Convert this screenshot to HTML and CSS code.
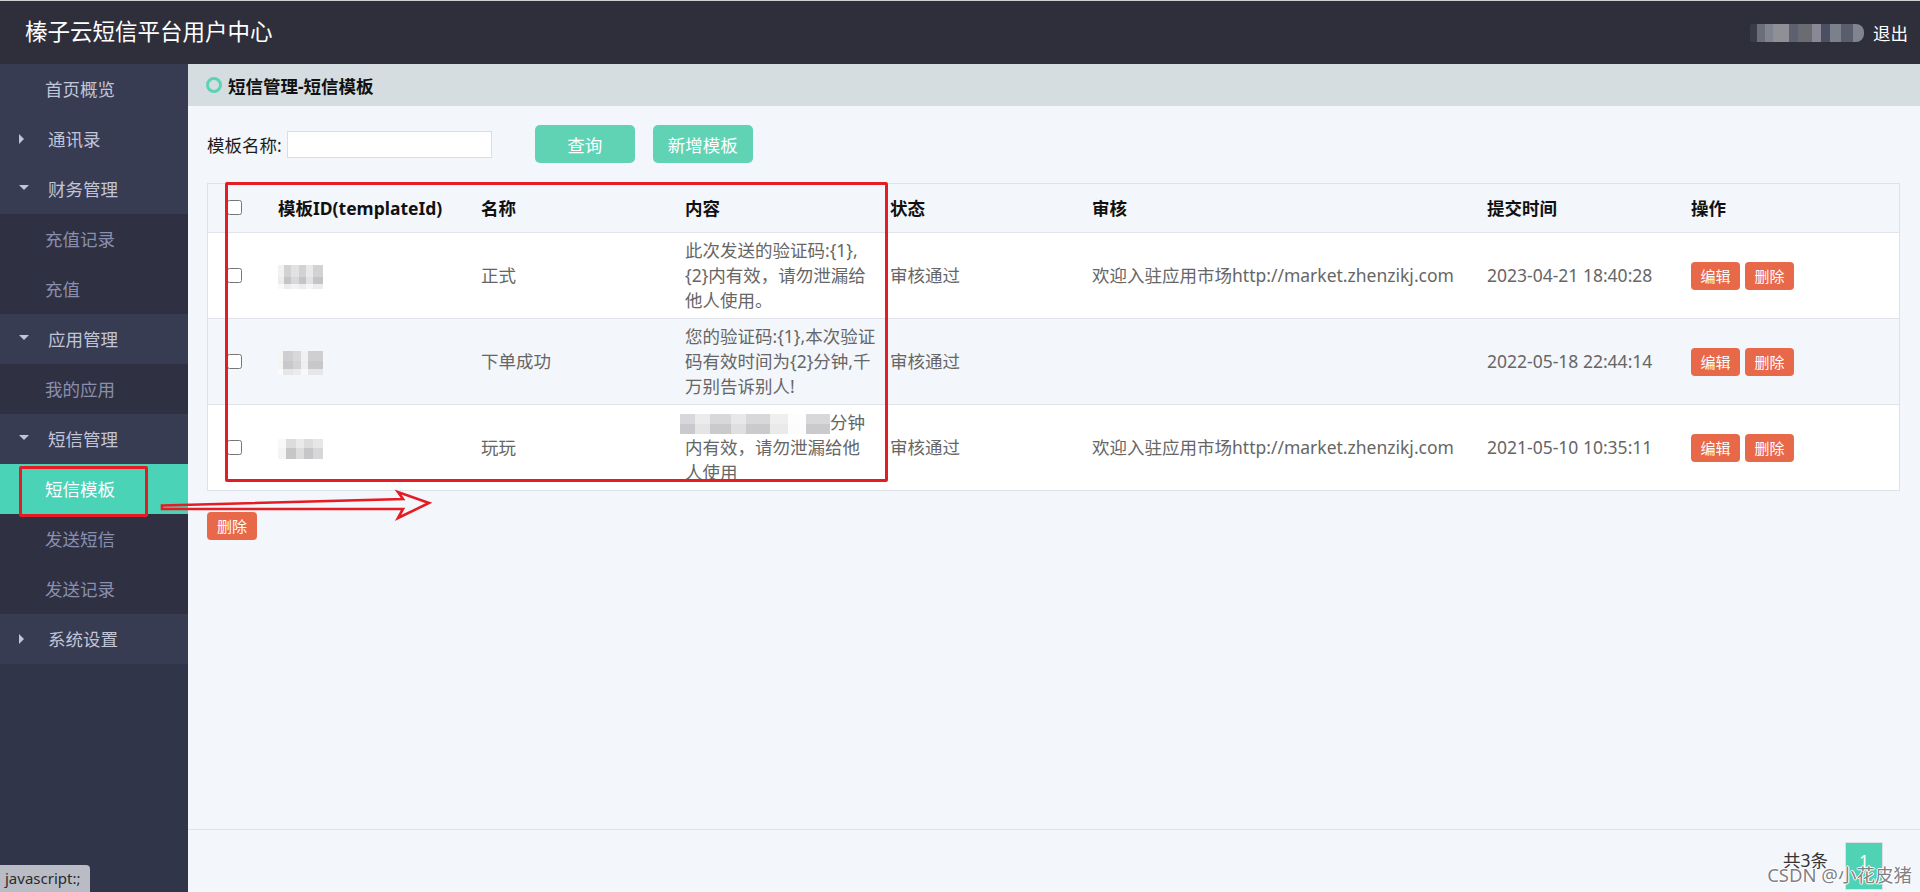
FILE: index.html
```html
<!DOCTYPE html>
<html lang="zh-CN">
<head>
<meta charset="utf-8">
<title>榛子云短信平台用户中心</title>
<link rel="stylesheet" href="styles.css">
</head>
<body>
<header class="topbar">
  <div class="brand">榛子云短信平台用户中心</div>
  <div class="user"><span class="mosaic mosaic-user"></span><a class="logout" href="javascript:;">退出</a></div>
</header>
<div class="layout">
  <aside class="sidebar">
    <ul class="menu">
      <li class="item top plain">首页概览</li>
      <li class="item top"><span class="caret caret-right"></span>通讯录</li>
      <li class="item top"><span class="caret caret-down"></span>财务管理</li>
      <li class="item sub">充值记录</li>
      <li class="item sub">充值</li>
      <li class="item top"><span class="caret caret-down"></span>应用管理</li>
      <li class="item sub">我的应用</li>
      <li class="item top"><span class="caret caret-down"></span>短信管理</li>
      <li class="item sub active">短信模板</li>
      <li class="item sub">发送短信</li>
      <li class="item sub">发送记录</li>
      <li class="item top"><span class="caret caret-right"></span>系统设置</li>
    </ul>
  </aside>
  <main class="main">
    <div class="crumb"><span class="ring"></span>短信管理-短信模板</div>
    <div class="content">
      <div class="search">
        <label class="search-label">模板名称:</label>
        <input class="search-input" type="text">
        <button class="btn btn-teal btn-query">查询</button>
        <button class="btn btn-teal btn-add">新增模板</button>
      </div>
      <table class="grid">
        <colgroup>
          <col class="c-check"><col class="c-id"><col class="c-name"><col class="c-content">
          <col class="c-status"><col class="c-audit"><col class="c-time"><col class="c-op">
        </colgroup>
        <thead>
          <tr>
            <th class="cell-check"><input type="checkbox" class="chk"></th>
            <th>模板ID(templateId)</th>
            <th>名称</th>
            <th>内容</th>
            <th>状态</th>
            <th>审核</th>
            <th>提交时间</th>
            <th>操作</th>
          </tr>
        </thead>
        <tbody>
          <tr>
            <td class="cell-check"><input type="checkbox" class="chk"></td>
            <td><span class="mosaic mosaic-id"></span></td>
            <td>正式</td>
            <td class="cell-content">此次发送的验证码:{1},<br>{2}内有效，请勿泄漏给<br>他人使用。</td>
            <td>审核通过</td>
            <td>欢迎入驻应用市场http://market.zhenzikj.com</td>
            <td>2023-04-21 18:40:28</td>
            <td><span class="ops"><button class="btn-sm">编辑</button><button class="btn-sm">删除</button></span></td>
          </tr>
          <tr class="alt">
            <td class="cell-check"><input type="checkbox" class="chk"></td>
            <td><span class="mosaic mosaic-id mosaic-id2"></span></td>
            <td>下单成功</td>
            <td class="cell-content">您的验证码:{1},本次验证<br>码有效时间为{2}分钟,千<br>万别告诉别人!</td>
            <td>审核通过</td>
            <td></td>
            <td>2022-05-18 22:44:14</td>
            <td><span class="ops"><button class="btn-sm">编辑</button><button class="btn-sm">删除</button></span></td>
          </tr>
          <tr>
            <td class="cell-check"><input type="checkbox" class="chk"></td>
            <td><span class="mosaic mosaic-id mosaic-id3"></span></td>
            <td>玩玩</td>
            <td class="cell-content"><span class="mosaic mosaic-text"></span>分钟<br>内有效，请勿泄漏给他<br>人使用</td>
            <td>审核通过</td>
            <td>欢迎入驻应用市场http://market.zhenzikj.com</td>
            <td>2021-05-10 10:35:11</td>
            <td><span class="ops"><button class="btn-sm">编辑</button><button class="btn-sm">删除</button></span></td>
          </tr>
        </tbody>
      </table>
      <button class="btn-sm btn-del-all">删除</button>
    </div>
    <div class="pager"><span class="total">共3条</span><span class="page">1</span></div>
  </main>
</div>
<div class="statusbar">javascript:;</div>
<div class="watermark">CSDN @小花皮猪</div>
<div class="mark mark-menu"></div>
<div class="mark mark-table"></div>
<svg class="arrow" width="285" height="36" viewBox="0 0 285 36">
  <path d="M7 17.5 L248 11 L243 4 L274 15 L243 30 L248 21 L7 21 Z" fill="none" stroke="#e61c24" stroke-width="2.6" stroke-linejoin="miter"/>
</svg>
</body>
</html>
```
FILE: styles.css
```css
* { box-sizing: border-box; }
html, body { margin: 0; padding: 0; height: 100%; overflow: hidden; }
body {
  font-family: "Noto Sans", "Noto Sans CJK SC", sans-serif;
  font-size: 17.5px;
  color: #333;
  background: #f3f6fa;
  position: relative;
}

/* top bar */
.topbar {
  height: 64px;
  border-top: 1px solid #cfd0d4;
  background: #2e2f3b;
  display: flex;
  align-items: center;
  justify-content: space-between;
  padding: 0 12px 0 25px;
}
.brand { color: #fff; font-size: 22.5px; line-height: 30px; margin-top: -1px; }
.user { display: flex; align-items: center; }
.logout { color: #fff; text-decoration: none; font-size: 17.5px; margin-left: 9px; }

/* layout */
.layout { display: flex; height: calc(100% - 64px); }
.sidebar { width: 188px; flex: none; background: #31354a; }
.menu { list-style: none; margin: 0; padding: 0; }
.item {
  height: 50px;
  line-height: 50px;
  font-size: 17.5px;
  white-space: nowrap;
}
.item.top {
  background: #383c53;
  color: #c1c5d8;
  display: flex;
  align-items: center;
  padding-left: 19px;
}
.item.plain { padding-left: 45px; }
.item.sub { background: #2f3142; color: #8a8fae; padding-left: 45px; }
.item.sub.active { background: #4ad3b7; color: #fff; }
.caret { display: inline-block; width: 0; height: 0; }
.caret-right {
  border-left: 5px solid #c1c5d8;
  border-top: 5px solid transparent;
  border-bottom: 5px solid transparent;
  margin-right: 24px;
}
.caret-down {
  border-top: 5px solid #c1c5d8;
  border-left: 5px solid transparent;
  border-right: 5px solid transparent;
  margin-right: 19px;
  margin-top: -3px;
}

/* main */
.main { flex: 1; display: flex; flex-direction: column; background: #f3f6fa; min-width: 0; }
.crumb {
  height: 42px;
  background: #d5dde0;
  display: flex;
  align-items: center;
  padding-left: 18px;
  font-weight: 700;
  color: #111;
  font-size: 17.5px;
}
.ring {
  width: 16px; height: 16px;
  border: 3.5px solid #5dd3b6;
  border-radius: 50%;
  margin-right: 6px;
}
.content { flex: 1; padding: 19px 20px 0 19px; }

.search { display: flex; align-items: center; height: 38px; }
.search-label { color: #1c1c1c; font-size: 17.5px; }
.search-input {
  width: 205px; height: 27px;
  margin-left: 5px;
  border: 1px solid #d8dee6;
  background: #fff;
  outline: none;
}
.btn {
  height: 38px; width: 100px;
  border: none;
  border-radius: 5px;
  font-family: inherit;
  font-size: 17.5px;
  color: #fff;
  padding: 0;
}
.btn-teal { background: #60d3b5; }
.btn-query { margin-left: 43px; }
.btn-add { margin-left: 18px; }

/* table */
.grid {
  width: 100%;
  margin-top: 20px;
  border: 1px solid #dfe3e9;
  border-spacing: 0;
  border-collapse: separate;
  table-layout: fixed;
  font-size: 17.5px;
  line-height: 25px;
}
.c-check { width: 60px; }
.c-id { width: 203px; }
.c-name { width: 204px; }
.c-content { width: 205px; }
.c-status { width: 202px; }
.c-audit { width: 395px; }
.c-time { width: 204px; }
.c-op { width: 218px; }
.grid thead tr { height: 48px; }
.grid th {
  text-align: left;
  font-weight: 700;
  color: #111;
  padding: 0 10px;
  background: #f3f6fa;
  vertical-align: middle;
  white-space: nowrap;
}
.grid tbody tr { height: 86px; }
.grid td {
  border-top: 1px solid #e0e4ea;
  padding: 0 10px;
  color: #666;
  vertical-align: middle;
  background: #fff;
  white-space: nowrap;
}
.grid tbody tr.alt td { background: #f3f6fa; }
.grid .cell-check { padding: 0 0 0 19px; }
.chk { width: 15px; height: 15px; margin: 0; vertical-align: middle; position: relative; top: -2px; }
.cell-content { line-height: 25px; }

.ops { display: inline-flex; gap: 5px; vertical-align: middle; }
.btn-sm {
  height: 28px;
  width: 49px;
  border: none;
  border-radius: 4px;
  background: #e8684a;
  color: #fff;
  font-family: inherit;
  font-size: 15px;
  line-height: 28px;
  padding: 0;
}
.btn-del-all { width: 50px; margin-top: 21px; display: block; }

/* mosaics (pixelated / blurred private data) */
.mosaic { display: inline-block; vertical-align: middle; filter: blur(0.6px); }
.mosaic-id {
  width: 45px; height: 24px;
  background:
    linear-gradient(90deg, rgba(255,255,255,0.7) 0 14%, transparent 14% 30%, rgba(255,255,255,0.35) 30% 46%, transparent 46% 62%, rgba(255,255,255,0.5) 62% 78%, transparent 78%),
    linear-gradient(180deg, #d2d2d4 0 48%, #c4c4c6 48% 80%, #ececee 80%);
}
.mosaic-id2 { background:
    linear-gradient(90deg, rgba(255,255,255,0.8) 0 12%, transparent 12% 34%, rgba(255,255,255,0.2) 34% 52%, rgba(255,255,255,0.7) 52% 66%, transparent 66%),
    linear-gradient(180deg, #cfcfd1 0 40%, #c8c8ca 40% 75%, #e6e6e8 75%);
}
.mosaic-id3 { height: 20px; background:
    linear-gradient(90deg, rgba(255,255,255,0.8) 0 18%, transparent 18% 40%, rgba(255,255,255,0.4) 40% 58%, transparent 58% 78%, rgba(255,255,255,0.3) 78%),
    linear-gradient(180deg, #dcdcde 0 45%, #c6c6c8 45%);
}
.mosaic-text {
  width: 150px; height: 20px; margin-left: -5px;
  background:
    linear-gradient(90deg, transparent 0 10%, rgba(255,255,255,0.5) 10% 20%, transparent 20% 34%, rgba(255,255,255,0.4) 34% 44%, transparent 44% 60%, rgba(255,255,255,0.6) 60% 72%, rgba(255,255,255,0.95) 72% 84%, transparent 84%),
    linear-gradient(180deg, #d8d8da 0 50%, #cacacc 50%);
}
.mosaic-user {
  width: 114px; height: 18px;
  filter: blur(0.4px);
  background:
    linear-gradient(90deg, #3a3c48 0 6%, #6b6f7a 6% 13%, #7f8490 13% 20%, #8e9096 20% 34%, #5c6070 34% 42%, #6a6c72 42% 54%, #8a8894 54% 62%, #4a5060 62% 70%, #7c808a 70% 80%, #5a5e6c 80% 90%, #808490 90%);
  border-radius: 2px 8px 8px 2px;
}

/* footer pager */
.pager {
  height: 63px;
  border-top: 1px solid #dfe2e7;
  display: flex;
  justify-content: flex-end;
  align-items: flex-start;
  padding: 12px 37px 0 0;
  gap: 17px;
}
.total { line-height: 36px; color: #333; }
.page {
  width: 38px; height: 48px;
  line-height: 36px;
  text-align: center;
  background: #50d2b5;
  color: #fff;
  border: 1px solid #dcdfe3;
}

/* overlays */
.statusbar {
  position: absolute; left: 0; bottom: 0;
  width: 90px; height: 27px;
  background: #b9bcc5;
  color: #2a2a2a;
  font-size: 15px;
  line-height: 27px;
  padding-left: 5px;
  border-top-right-radius: 4px;
}
.watermark {
  position: absolute; right: 8px; top: 862px;
  font-size: 18.5px;
  line-height: 26px;
  color: rgba(105,105,110,0.85);
  text-shadow: 1px 0 0 #fff, -1px 0 0 #fff, 0 1px 0 #fff, 0 -1px 0 #fff;
  white-space: nowrap;
}
.mark { position: absolute; border: 3px solid #e61c24; border-radius: 2px; pointer-events: none; }
.mark-menu { left: 19px; top: 466px; width: 129px; height: 51px; }
.mark-table { left: 225px; top: 182px; width: 663px; height: 300px; }
.arrow { position: absolute; left: 155px; top: 488px; pointer-events: none; }
```
